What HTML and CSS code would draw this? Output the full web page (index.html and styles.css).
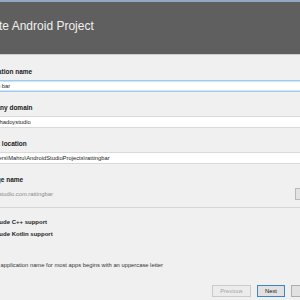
FILE: index.html
```html
<!DOCTYPE html>
<html>
<head>
<meta charset="utf-8">
<link rel="stylesheet" href="styles.css">
</head>
<body>
<div class="topline"></div>
<header class="header">
  <h1 class="title">Create Android Project</h1>
</header>
<main class="form">
  <div class="field">
    <label class="label">Application name</label>
    <div class="input focused">ratting bar</div>
  </div>
  <div class="field">
    <label class="label">Company domain</label>
    <div class="input">com.shadoystudio</div>
  </div>
  <div class="field">
    <label class="label">Project location</label>
    <div class="input">C:\Users\Mahru\AndroidStudioProjects\rattingbar</div>
  </div>
  <div class="field pkg">
    <label class="label">Package name</label>
    <div class="pkg-row">
      <span class="pkg-text">shadoystudio.com.rattingbar</span>
      <span class="edit-btn">Edit</span>
    </div>
  </div>
  <div class="sep"></div>
  <div class="checks">
    <div class="check"><span class="box"></span><span class="check-label">Include C++ support</span></div>
    <div class="check"><span class="box"></span><span class="check-label">Include Kotlin support</span></div>
  </div>
  <p class="hint">The application name for most apps begins with an uppercase letter</p>
  <div class="footer">
    <span class="btn disabled">Previous</span>
    <span class="btn primary">Next</span>
    <span class="btn">Cancel</span>
  </div>
</main>
</body>
</html>
```

FILE: styles.css
```css
html, body {
  margin: 0;
  padding: 0;
}
body {
  width: 300px;
  height: 300px;
  overflow: hidden;
  background: #f0f0f0;
  font-family: "Liberation Sans", Arial, sans-serif;
  color: #1e1e1e;
}
.topline {
  height: 2px;
  background: #8fa9c2;
}
.header {
  height: 52px;
  background: #5f5f5f;
  border-bottom: 1px solid #cdcdcd;
  display: flex;
  align-items: center;
}
.title {
  margin: 0 0 0 -27px;
  font-size: 12px;
  font-weight: normal;
  color: #f0f0f0;
  white-space: nowrap;
  line-height: 14px;
  padding-bottom: 4px;
}
.form {
  margin-left: -22px;
  width: 400px;
  padding-top: 12px;
}
.field {
  margin-bottom: 11px;
}
.label {
  display: block;
  font-size: 6.5px;
  font-weight: bold;
  line-height: 10px;
  height: 10px;
  white-space: nowrap;
  color: #1a1a1a;
}
.input {
  margin-top: 3px;
  margin-left: -1px;
  height: 10px;
  line-height: 10px;
  background: #fff;
  border-top: 1px solid #d9d9d9;
  border-bottom: 1px solid #d9d9d9;
  padding-left: 7px;
  font-size: 5.8px;
  white-space: nowrap;
  color: #222;
}
.input.focused {
  border-top: 1px solid #9fcbee;
  border-bottom: 1px solid #9fcbee;
  box-shadow: 0 1px 0 #cfe5f6 inset, 0 -1px 0 #cfe5f6 inset;
}
.field.pkg {
  margin-bottom: 0;
}
.pkg-row {
  margin-top: 3px;
  padding-left: 2px;
  height: 12px;
  display: flex;
  align-items: center;
  width: 335px;
  justify-content: space-between;
}
.pkg-text {
  font-size: 5.8px;
  color: #8a8a8a;
  white-space: nowrap;
}
.edit-btn {
  box-sizing: border-box;
  height: 12px;
  width: 20px;
  border: 1px solid #b9b9b9;
  background: #e3e3e3;
  font-size: 5.8px;
  line-height: 10px;
  padding-left: 4px;
  color: #888;
}
.sep {
  margin-top: 7px;
  height: 1px;
  background: #d6d6d6;
}
.checks {
  margin-top: 8px;
}
.check {
  display: flex;
  align-items: center;
  gap: 4px;
  height: 12px;
}
.box {
  width: 7px;
  height: 7px;
  box-sizing: border-box;
  border: 1px solid #333;
  background: #fff;
}
.check-label {
  font-size: 6px;
  font-weight: bold;
  white-space: nowrap;
}
.hint {
  margin: 20px 0 0 11px;
  font-size: 5.8px;
  line-height: 10px;
  white-space: nowrap;
  color: #333;
}
.footer {
  margin-top: 15px;
  padding-left: 234px;
  display: flex;
  gap: 6px;
}
.btn {
  box-sizing: border-box;
  height: 12px;
  line-height: 10px;
  font-size: 5.8px;
  border: 1px solid #adadad;
  background: #e1e1e1;
  text-align: center;
  color: #111;
  white-space: nowrap;
}
.btn.disabled {
  width: 39px;
  color: #a3a3a3;
  border-color: #cacaca;
  background: #ececec;
}
.btn.primary {
  width: 28px;
  border-color: #3d84c4;
}
.btn:last-child {
  width: 36px;
}
```
